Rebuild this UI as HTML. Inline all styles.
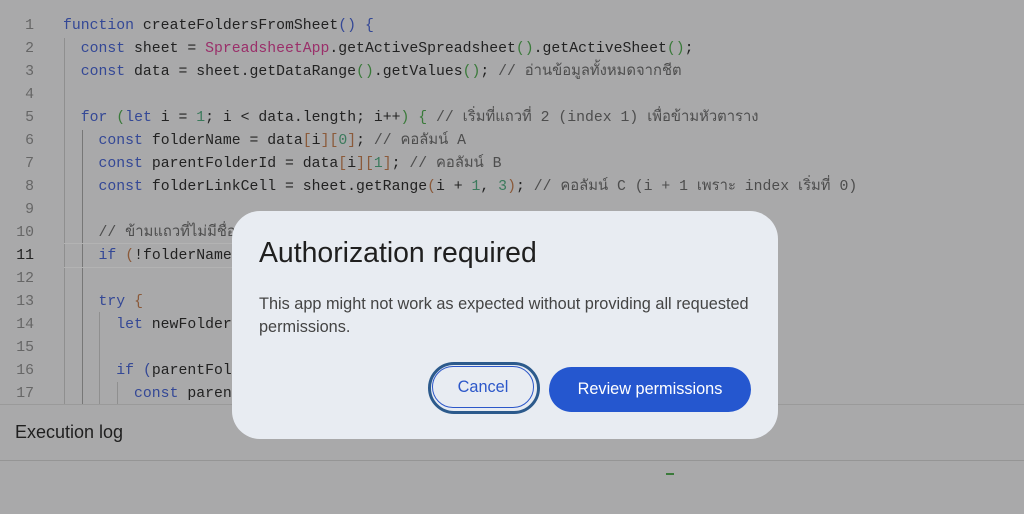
<!DOCTYPE html>
<html><head><meta charset="utf-8"><style>
body{margin:0;width:1024px;height:514px;background:#a9a9aa;overflow:hidden;position:relative;font-family:"Liberation Sans",sans-serif}
.code{position:absolute;left:0;top:15px;font-family:"Liberation Mono","Noto Sans CJK SC",monospace;font-size:14.8px;color:#222;white-space:pre}
.ln{position:absolute;width:34px;text-align:right;color:#666;left:0}
.l{position:absolute;left:63px;height:23px;line-height:23px}
.ln{height:23px;line-height:23px}
.k{color:#344896}.s{color:#9a2f6a}.n{color:#3b7a5c}.b{color:#8b5a3a}.c{color:#4d4d4d}.p{color:#3a7a3a}
.g{position:absolute;width:1px;background:#8f8f8f}
.dlg{position:absolute;left:232px;top:211px;width:546px;height:228px;background:#e8ecf2;border-radius:28px}
</style></head><body>
<div class="g" style="left:64px;top:38px;height:367px"></div>
<div class="g" style="left:82px;top:130px;height:275px;background:#777"></div>
<div class="g" style="left:99px;top:312px;height:93px"></div>
<div class="g" style="left:117px;top:382px;height:23px"></div>
<div style="position:absolute;left:64px;top:243px;width:180px;height:23px;border-top:1px solid #b3b3b3;border-bottom:1px solid #b3b3b3"></div>
<div class="code">
<div class="ln" style="top:0">1</div><div class="l" style="top:0"><span class="k">function</span> createFoldersFromSheet<span class="k">()</span> <span class="k">{</span></div>
<div class="ln" style="top:23px">2</div><div class="l" style="top:23px">  <span class="k">const</span> sheet = <span class="s">SpreadsheetApp</span>.getActiveSpreadsheet<span class="p">()</span>.getActiveSheet<span class="p">()</span>;</div>
<div class="ln" style="top:46px">3</div><div class="l" style="top:46px">  <span class="k">const</span> data = sheet.getDataRange<span class="p">()</span>.getValues<span class="p">()</span>; <span class="c">// อ่านข้อมูลทั้งหมดจากชีต</span></div>
<div class="ln" style="top:69px">4</div>
<div class="ln" style="top:92px">5</div><div class="l" style="top:92px">  <span class="k">for</span> <span class="p">(</span><span class="k">let</span> i = <span class="n">1</span>; i &lt; data.length; i++<span class="p">)</span> <span class="p">{</span> <span class="c">// เริ่มที่แถวที่ 2 (index 1) เพื่อข้ามหัวตาราง</span></div>
<div class="ln" style="top:115px">6</div><div class="l" style="top:115px">    <span class="k">const</span> folderName = data<span class="b">[</span>i<span class="b">][</span><span class="n">0</span><span class="b">]</span>; <span class="c">// คอลัมน์ A</span></div>
<div class="ln" style="top:138px">7</div><div class="l" style="top:138px">    <span class="k">const</span> parentFolderId = data<span class="b">[</span>i<span class="b">][</span><span class="n">1</span><span class="b">]</span>; <span class="c">// คอลัมน์ B</span></div>
<div class="ln" style="top:161px">8</div><div class="l" style="top:161px">    <span class="k">const</span> folderLinkCell = sheet.getRange<span class="b">(</span>i + <span class="n">1</span>, <span class="n">3</span><span class="b">)</span>; <span class="c">// คอลัมน์ C (i + 1 เพราะ index เริ่มที่ 0)</span></div>
<div class="ln" style="top:184px">9</div>
<div class="ln" style="top:207px">10</div><div class="l" style="top:207px">    <span class="c">// ข้ามแถวที่ไม่มีชื่อ</span></div>
<div class="ln" style="top:230px;color:#222">11</div><div class="l" style="top:230px">    <span class="k">if</span> <span class="b">(</span>!folderName</div>
<div class="ln" style="top:253px">12</div>
<div class="ln" style="top:276px">13</div><div class="l" style="top:276px">    <span class="k">try</span> <span class="b">{</span></div>
<div class="ln" style="top:299px">14</div><div class="l" style="top:299px">      <span class="k">let</span> newFolder</div>
<div class="ln" style="top:322px">15</div>
<div class="ln" style="top:345px">16</div><div class="l" style="top:345px">      <span class="k">if</span> <span class="k">(</span>parentFol</div>
<div class="ln" style="top:368px">17</div><div class="l" style="top:368px">        <span class="k">const</span> paren</div>
</div>
<div style="position:absolute;left:0;top:404px;width:1024px;height:1px;background:#9a9a9a"></div>
<div style="position:absolute;left:0;top:405px;width:1024px;height:55px;background:#a9a9aa"></div>
<div style="position:absolute;left:15px;top:422px;font-size:18px;color:#1f1f1f">Execution log</div>
<div style="position:absolute;left:0;top:460px;width:1024px;height:1px;background:#959595"></div>
<div style="position:absolute;left:666px;top:473px;width:8px;height:2px;background:#3a7a3a"></div>
<div class="dlg">
<div style="position:absolute;left:27px;top:26px;font-size:28.4px;color:#1f1f1f">Authorization required</div>
<div style="position:absolute;left:27px;top:82px;width:515px;font-size:16.3px;line-height:23px;color:#444">This app might not work as expected without providing all requested permissions.</div>
<div style="position:absolute;left:196px;top:151px;width:106px;height:46px;border:3px solid #2c5a8c;border-radius:28px"></div>
<div style="position:absolute;left:200px;top:155px;width:100px;height:40px;border:1.5px solid #2c57c9;border-radius:24px;text-align:center;line-height:41px;font-size:16.3px;color:#2c57c9">Cancel</div>
<div style="position:absolute;left:317px;top:156px;width:202px;height:45px;background:#2557cf;border-radius:23px;text-align:center;line-height:45px;font-size:16.3px;color:#fff">Review permissions</div>
</div>
</body></html>
